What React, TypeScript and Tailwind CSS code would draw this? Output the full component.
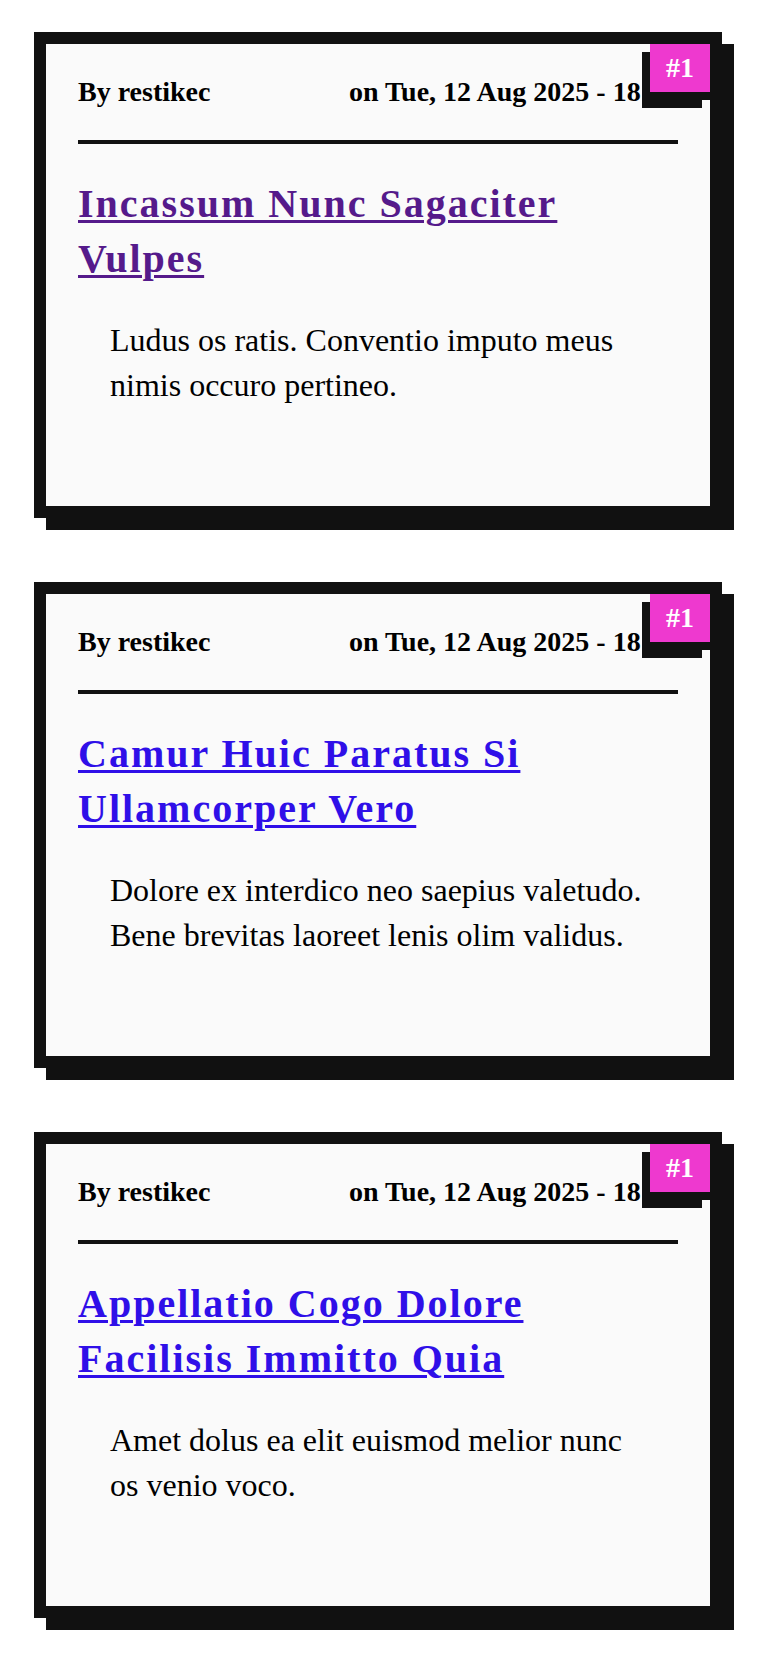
const posts = [
  {
    title: "Incassum Nunc Sagaciter Vulpes",
    body: "Ludus os ratis. Conventio imputo meus nimis occuro pertineo.",
    visited: true,
  },
  {
    title: "Camur Huic Paratus Si Ullamcorper Vero",
    body: "Dolore ex interdico neo saepius valetudo. Bene brevitas laoreet lenis olim validus.",
    visited: false,
  },
  {
    title: "Appellatio Cogo Dolore Facilisis Immitto Quia",
    body: "Amet dolus ea elit euismod melior nunc os venio voco.",
    visited: false,
  },
];

function PostCard({ title, body, visited }: { title: string; body: string; visited: boolean }) {
  return (
    <article className="relative box-border min-h-[486px] w-[688px] border-[12px] border-[#111111] bg-[#fafafa] px-8 pt-8 shadow-[12px_12px_0_#111111]">
      <span className="absolute right-0 top-0 z-10 box-content flex h-12 w-[60px] items-center justify-center border-b-8 border-[#111111] bg-[#ee39cf] text-[28px] font-bold leading-none text-white shadow-[-8px_8px_0_#111111]">
        #1
      </span>
      <header className="flex items-center justify-between border-b-4 border-[#111111] pb-8 text-[28px] font-bold leading-8 text-black">
        <span>By restikec</span>
        <span>on Tue, 12 Aug 2025 - 18:00</span>
      </header>
      <h2 className="mt-8 text-[40px] font-bold leading-[55px] tracking-[0.05em]">
        <a
          href="#"
          className={
            visited
              ? "text-[#551a8b] underline decoration-[3px] underline-offset-[3px]"
              : "text-[#2f0fe8] underline decoration-[3px] underline-offset-[3px]"
          }
        >
          {title}
        </a>
      </h2>
      <p className="mt-8 px-8 text-[32px] leading-[45px] text-black">{body}</p>
    </article>
  );
}

export default function App() {
  return (
    <div
      className="flex min-h-[1662px] flex-col gap-16 bg-white pb-[44px] pl-[34px] pt-8"
      style={{ fontFamily: '"Liberation Serif", "Times New Roman", serif' }}
    >
      {posts.map((p) => (
        <PostCard key={p.title} {...p} />
      ))}
    </div>
  );
}
